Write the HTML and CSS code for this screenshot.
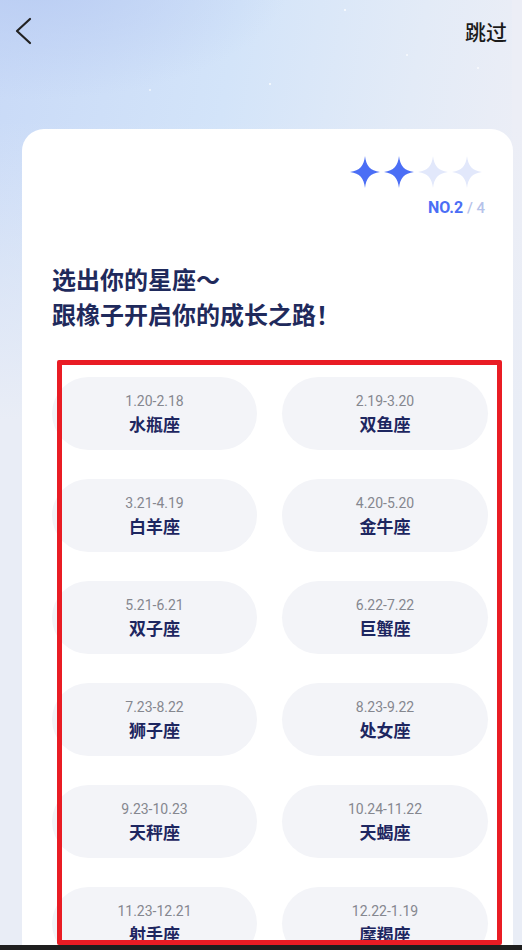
FILE: index.html
```html
<!DOCTYPE html>
<html lang="zh-CN">
<head>
    <meta charset="UTF-8">
    <meta name="viewport" content="width=device-width, initial-scale=1.0">
    <title>选择星座</title>
    <link rel="stylesheet" href="styles.css">
</head>
<body>
    <div class="page">
        <!-- Top Navigation -->
        <div class="nav">
            <svg class="back" width="20" height="28" viewBox="0 0 20 28">
                <path d="M17 2 L4 14 L17 26" fill="none" stroke="#222" stroke-width="2.2" stroke-linecap="round" stroke-linejoin="round"/>
            </svg>
            <span class="skip">跳过</span>
        </div>

        <!-- Main Card -->
        <div class="card">
            <div class="progress">
                <div class="stars">
                    <svg class="star on" viewBox="0 0 30 32"><path d="M15 0 C16.2 10 20 14.5 30 16 C20 17.5 16.2 22 15 32 C13.8 22 10 17.5 0 16 C10 14.5 13.8 10 15 0Z"/></svg>
                    <svg class="star on" viewBox="0 0 30 32"><path d="M15 0 C16.2 10 20 14.5 30 16 C20 17.5 16.2 22 15 32 C13.8 22 10 17.5 0 16 C10 14.5 13.8 10 15 0Z"/></svg>
                    <svg class="star" viewBox="0 0 30 32"><path d="M15 0 C16.2 10 20 14.5 30 16 C20 17.5 16.2 22 15 32 C13.8 22 10 17.5 0 16 C10 14.5 13.8 10 15 0Z"/></svg>
                    <svg class="star" viewBox="0 0 30 32"><path d="M15 0 C16.2 10 20 14.5 30 16 C20 17.5 16.2 22 15 32 C13.8 22 10 17.5 0 16 C10 14.5 13.8 10 15 0Z"/></svg>
                </div>
                <div class="step"><span class="step-now">NO.2</span><span class="step-total"> / 4</span></div>
            </div>

            <h1 class="title">选出你的星座～<br>跟橡子开启你的成长之路！</h1>

            <div class="grid">
                <div class="sign"><span class="date">1.20-2.18</span><span class="name">水瓶座</span></div>
                <div class="sign"><span class="date">2.19-3.20</span><span class="name">双鱼座</span></div>
                <div class="sign"><span class="date">3.21-4.19</span><span class="name">白羊座</span></div>
                <div class="sign"><span class="date">4.20-5.20</span><span class="name">金牛座</span></div>
                <div class="sign"><span class="date">5.21-6.21</span><span class="name">双子座</span></div>
                <div class="sign"><span class="date">6.22-7.22</span><span class="name">巨蟹座</span></div>
                <div class="sign"><span class="date">7.23-8.22</span><span class="name">狮子座</span></div>
                <div class="sign"><span class="date">8.23-9.22</span><span class="name">处女座</span></div>
                <div class="sign"><span class="date">9.23-10.23</span><span class="name">天秤座</span></div>
                <div class="sign"><span class="date">10.24-11.22</span><span class="name">天蝎座</span></div>
                <div class="sign"><span class="date">11.23-12.21</span><span class="name">射手座</span></div>
                <div class="sign"><span class="date">12.22-1.19</span><span class="name">摩羯座</span></div>
            </div>
        </div>

        <div class="bottom-bar"></div>
    </div>

    <!-- Highlight frame over the list -->
    <div class="highlight"></div>
</body>
</html>
```

FILE: styles.css
```css
/* Page background */
body {
    margin: 0;
    width: 522px;
    height: 950px;
    overflow: hidden;
    position: relative;
    font-family: Roboto, "Noto Sans CJK SC", sans-serif;
    background:
        radial-gradient(circle at 270px 84px, rgba(255, 255, 255, 0.7) 0 1px, transparent 1.5px),
        radial-gradient(circle at 345px 10px, rgba(255, 255, 255, 0.7) 0 1px, transparent 1.5px),
        radial-gradient(circle at 407px 55px, rgba(255, 255, 255, 0.6) 0 1px, transparent 1.5px),
        radial-gradient(circle at 478px 68px, rgba(255, 255, 255, 0.6) 0 1px, transparent 1.5px),
        radial-gradient(circle at 150px 90px, rgba(255, 255, 255, 0.5) 0 1px, transparent 1.5px),
        radial-gradient(ellipse 260px 120px at 30px -20px, #bacdf3 0%, rgba(186, 205, 243, 0) 100%),
        linear-gradient(to bottom, rgba(233, 237, 246, 0) 0, rgba(233, 237, 246, 0) 120px, #e9edf6 420px),
        linear-gradient(to bottom, #eceef6 0, #eceef6 450px, #c8e3fb 950px) right top / 10px 950px no-repeat,
        linear-gradient(100deg, #c9daf7 0%, #d3e4f9 35%, #e3ebf7 62%, #eceef6 80%, #eef0f7 100%);
    color: #1f2a5c;
}

.page {
    display: flex;
    flex-direction: column;
    height: 950px;
}

/* Top Navigation */
.nav {
    height: 60px;
    display: flex;
    align-items: center;
    justify-content: space-between;
    padding: 0 15px 0 13px;
    flex-shrink: 0;
}

.back {
    display: block;
    margin-top: 2px;
}

.skip {
    font-size: 21px;
    font-weight: 500;
    color: #1b1b1b;
    margin-top: 1px;
}

/* Card */
.card {
    flex: 1;
    min-height: 0;
    overflow: hidden;
    margin: 69px 9px 0 22px;
    background: #fff;
    border-radius: 22px 22px 0 0;
    padding: 27px 0 0 30px;
}

/* Progress Stars */
.progress {
    display: flex;
    flex-direction: column;
    align-items: flex-end;
    padding-right: 28px;
}

.stars {
    display: flex;
    gap: 4px;
    margin-right: 3px;
}

.star {
    width: 30px;
    height: 32px;
    fill: #e2e8fb;
}

.star.on {
    fill: #4b6ef5;
}

.step {
    margin-top: 10px;
    font-size: 16px;
    line-height: 20px;
    font-weight: 700;
}

.step-now {
    color: #4b6ef5;
}

.step-total {
    color: #b6c2ea;
    font-weight: 500;
    font-size: 15px;
}

/* Title */
.title {
    margin: 46px 0 0 0;
    font-size: 24px;
    line-height: 35px;
    font-weight: 700;
    color: #1f2a5c;
}

/* Zodiac Grid */
.grid {
    display: grid;
    grid-template-columns: 205px 206px;
    column-gap: 25px;
    row-gap: 29px;
    margin-top: 43px;
}

.sign {
    height: 73px;
    border-radius: 37px;
    background: #f3f4f8;
    display: flex;
    flex-direction: column;
    align-items: center;
    justify-content: center;
}

.date {
    font-size: 14px;
    line-height: 20px;
    color: #85878f;
}

.name {
    margin-top: 2px;
    font-size: 17px;
    line-height: 24px;
    font-weight: 700;
    color: #1d2660;
}

/* Bottom system bar */
.bottom-bar {
    height: 5px;
    flex-shrink: 0;
    background: #1f1f1f;
}

/* Red highlight frame */
.highlight {
    position: absolute;
    left: 57px;
    top: 360px;
    width: 435px;
    height: 575px;
    border: 5px solid #e91c24;
    border-radius: 2px;
}
```
